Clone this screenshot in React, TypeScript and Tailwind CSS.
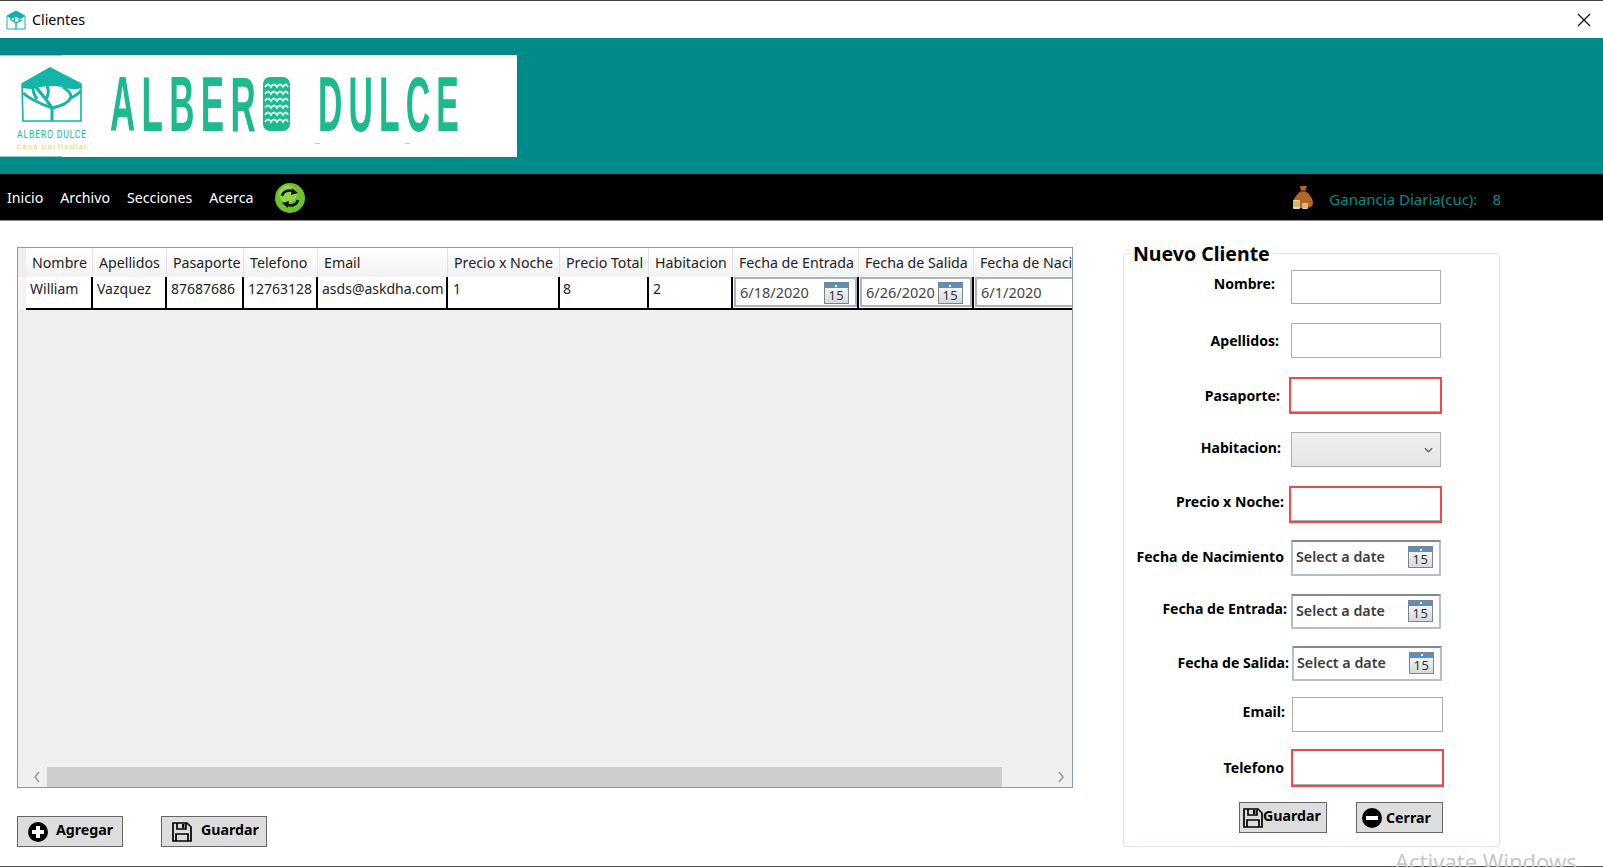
import type { ReactNode } from "react";

const uiFont = "font-['Noto_Sans','Open_Sans',sans-serif]";

function LogoArt() {
  return (
    <svg viewBox="0 0 517 102" className="block h-[102px] w-[517px] bg-white">
      <rect x="0" y="0" width="62" height="1" fill="#8fd0cc" />
      <rect x="0" y="101" width="62" height="1" fill="#8fd0cc" />
      {/* house with tree */}
      <path d="M22 29 L50 13 L81 29 L81 66 L23 66 Z" fill="none" stroke="#12b5a8" strokeWidth="1.6" />
      <path d="M22 29 L50 13 L81 29 L81 33 C74 36 68 33 62 32 C54 30 44 31 36 33 C30 35 26 33 22 33 Z" fill="#12b5a8" />
      <path
        d="M52 66 L52 53 M52 53 C48 46 42 40 36 32 M52 53 C44 50 32 46 23 38 M52 53 C60 51 68 49 71 42 C71 38 68 35 63 32 M46 44 C49 39 49 35 47 31 M71 43 C75 41 78 39 81 36 M37 44 C34 40 33 37 33 33"
        fill="none"
        stroke="#12b5a8"
        strokeWidth="3"
      />
      <text x="17" y="83" fontFamily="Roboto, sans-serif" fontSize="11" fill="#1cb894" textLength="70" lengthAdjust="spacingAndGlyphs" letterSpacing="1">
        ALBERO DULCE
      </text>
      <text x="17" y="94" fontFamily="Roboto, sans-serif" fontSize="8" fill="#f3cf5a" textLength="71" letterSpacing="1">
        casa particular
      </text>
      {/* big wordmark */}
      <text x="110" y="76" fontFamily="'Liberation Sans', sans-serif" fontWeight="700" fontSize="77" fill="#1fb98f" letterSpacing="14" textLength="152" lengthAdjust="spacingAndGlyphs">
        ALBER
      </text>
      <rect x="263" y="22" width="27" height="54" rx="7" fill="#1fb98f" />
      <path
        d="M265 32 q3 -5 6 0 q3 -5 6 0 q3 -5 6 0 q3 -5 5 0 M265 39 q3 -5 6 0 q3 -5 6 0 q3 -5 6 0 q3 -5 5 0 M265 46 q3 -5 6 0 q3 -5 6 0 q3 -5 6 0 q3 -5 5 0 M265 53 q3 -5 6 0 q3 -5 6 0 q3 -5 6 0 q3 -5 5 0 M265 60 q3 -5 6 0 q3 -5 6 0 q3 -5 6 0 q3 -5 5 0 M265 67 q3 -5 6 0 q3 -5 6 0 q3 -5 6 0 q3 -5 5 0"
        fill="none"
        stroke="#d6f3ea"
        strokeWidth="1.8"
      />
      <text x="318" y="76" fontFamily="'Liberation Sans', sans-serif" fontWeight="700" fontSize="77" fill="#1fb98f" letterSpacing="14" textLength="147" lengthAdjust="spacingAndGlyphs">
        DULCE
      </text>
      <rect x="315" y="88" width="5" height="1" fill="#f3cf5a" />
      <rect x="405" y="88" width="5" height="1" fill="#f3cf5a" />
    </svg>
  );
}

function TitleIcon() {
  return (
    <svg viewBox="0 0 20 20" className="h-5 w-5">
      <path d="M1 6 L10 1 L19 6 L19 19 L1 19 Z" fill="#fff" stroke="#15aeb0" strokeWidth="1" />
      <path d="M1 6 L10 1 L19 6 L15 9 L10 7 L5 9 Z" fill="#15aeb0" />
      <path d="M10 19 L10 13 M10 13 L4 9 M10 13 L16 10 M8 11 L9 8 M13 11 L13 8" stroke="#15aeb0" strokeWidth="1.3" fill="none" />
    </svg>
  );
}

function RefreshIcon() {
  return (
    <svg viewBox="0 0 30 30" className="h-[30px] w-[30px]">
      <circle cx="15" cy="15" r="15" fill="#6fc02c" />
      <circle cx="13" cy="11" r="9" fill="#8fd64a" />
      <path d="M7 13 C8 8 14 6 19 9" fill="none" stroke="#111" strokeWidth="2.6" />
      <path d="M17 5 L23 10 L16 12 Z" fill="#111" />
      <path d="M23 17 C22 22 16 24 11 21" fill="none" stroke="#111" strokeWidth="2.6" />
      <path d="M13 25 L7 20 L14 18 Z" fill="#111" />
    </svg>
  );
}

function MoneyBag() {
  return (
    <svg viewBox="0 0 22 24" className="h-6 w-[22px]">
      <path d="M8 1 L15 1 L13 6 C18 9 21 14 21 18 C21 22 18 23 11 23 C4 23 1 22 1 18 C1 14 5 9 9 6 Z" fill="#b5642a" />
      <rect x="9" y="5" width="5" height="2" fill="#6e3a14" />
      <rect x="1" y="15" width="7" height="9" rx="1" fill="#f0d79a" />
      <path d="M1 17 H8 M1 19 H8 M1 21 H8" stroke="#a9843f" strokeWidth="0.8" />
      <rect x="10" y="18" width="6" height="6" rx="1" fill="#f0d79a" />
      <path d="M10 20 H16 M10 22 H16" stroke="#a9843f" strokeWidth="0.8" />
    </svg>
  );
}

function CalendarIcon() {
  return (
    <div className="flex h-[22px] w-[25px] shrink-0 flex-col border border-[#7d848c] bg-gradient-to-b from-white to-[#d5d8dc]">
      <div className="flex h-[5px] items-center justify-center bg-[#5b8fc4]">
        <div className="h-[2px] w-[2px] bg-white" />
      </div>
      <div className={`${uiFont} flex flex-1 items-center justify-center text-[13px] leading-none tracking-[0.5px] text-[#333]`}>15</div>
    </div>
  );
}

function FloppyIcon({ className }: { className: string }) {
  return (
    <svg viewBox="0 0 20 20" className={className}>
      <path d="M1 1 H15 L19 5 V19 H1 Z" fill="none" stroke="#000" strokeWidth="1.7" />
      <path d="M5 1 V7 H14 V1" fill="none" stroke="#000" strokeWidth="1.7" />
      <rect x="10" y="2" width="2.4" height="4" fill="#000" />
      <path d="M4 19 V12 H16 V19" fill="none" stroke="#000" strokeWidth="1.7" />
    </svg>
  );
}

function CircleIcon({ plus }: { plus?: boolean }) {
  return (
    <svg viewBox="0 0 20 20" className="h-5 w-5">
      <circle cx="10" cy="10" r="10" fill="#000" />
      <rect x="4" y="8" width="12" height="4" fill="#fff" />
      {plus && <rect x="8" y="4" width="4" height="12" fill="#fff" />}
    </svg>
  );
}

const columns = [
  { title: "Nombre", value: "William", w: "w-[67px]", pad: "pl-[4px]" },
  { title: "Apellidos", value: "Vazquez", w: "w-[74px]", pad: "pl-[4px]" },
  { title: "Pasaporte", value: "87687686", w: "w-[77px]", pad: "pl-[4px]" },
  { title: "Telefono", value: "12763128", w: "w-[74px]", pad: "pl-[4px]" },
  { title: "Email", value: "asds@askdha.com", w: "w-[130px]", pad: "pl-[4px]" },
  { title: "Precio x Noche", value: "1", w: "w-[112px]", pad: "pl-[5px]" },
  { title: "Precio Total", value: "8", w: "w-[89px]", pad: "pl-[3px]" },
  { title: "Habitacion", value: "2", w: "w-[84px]", pad: "pl-[4px]" },
];

function DateCell({ w, value, gap, icon = true }: { w: string; value: string; gap: string; icon?: boolean }) {
  return (
    <div className={`${w} h-full shrink-0 border-r-2 border-black pl-[1px]`}>
      <div className="flex h-[30px] w-full items-center border-2 border-[#a9b4c2] bg-white pt-[2px] pl-[4px]">
        <span className="text-[14.5px] text-[#444]">{value}</span>
        {icon && <div className={gap}><CalendarIcon /></div>}
      </div>
    </div>
  );
}

function ClientsTable() {
  return (
    <div className="flex h-[541px] w-[1056px] flex-col overflow-hidden border border-[#7f9db9] bg-[#efefef]">
      <div className="flex flex-1 flex-col overflow-hidden">
        <div className="flex h-[29px] shrink-0 pl-[8px]">
          {columns.map((c) => (
            <div key={c.title} className={`${c.w} flex shrink-0 items-center border-r border-[#e3e3e3] bg-gradient-to-b from-white to-[#f2f2f2] pl-[6px] text-[14.2px] whitespace-nowrap text-[#222]`}>
              {c.title}
            </div>
          ))}
          <div className="flex w-[126px] shrink-0 items-center border-r border-[#e3e3e3] bg-gradient-to-b from-white to-[#f2f2f2] pl-[6px] text-[14.2px] whitespace-nowrap text-[#222]">Fecha de Entrada</div>
          <div className="flex w-[115px] shrink-0 items-center border-r border-[#e3e3e3] bg-gradient-to-b from-white to-[#f2f2f2] pl-[6px] text-[14.2px] whitespace-nowrap text-[#222]">Fecha de Salida</div>
          <div className="flex w-[120px] shrink-0 items-center bg-gradient-to-b from-white to-[#f2f2f2] pl-[6px] text-[14.2px] whitespace-nowrap text-[#222]">Fecha de Nacimiento</div>
        </div>
        <div className="flex h-[33px] shrink-0">
          <div className="w-[8px] shrink-0 bg-[#f4f4f4]" />
          <div className="flex h-full grow border-b-2 border-black bg-white">
            {columns.map((c) => (
              <div key={c.title} className={`${c.w} ${c.pad} h-full shrink-0 border-r-2 border-black text-[14px] leading-[24px] whitespace-nowrap text-[#222]`}>
                {c.value}
              </div>
            ))}
            <DateCell w="w-[126px]" value="6/18/2020" gap="ml-[15px]" />
            <DateCell w="w-[115px]" value="6/26/2020" gap="ml-[3px]" />
            <DateCell w="w-[120px]" value="6/1/2020" gap="" icon={false} />
          </div>
        </div>
      </div>
      <div className="flex h-5 shrink-0 items-center bg-[#f0f0f0]">
        <div className="flex w-[29px] justify-center pl-[8px] text-[#9a9a9a]">
          <svg viewBox="0 0 8 12" className="h-3 w-2"><path d="M6 1 L2 6 L6 11" fill="none" stroke="currentColor" strokeWidth="1.5" /></svg>
        </div>
        <div className="h-full w-[955px] bg-[#cdcdcd]" />
        <div className="flex flex-1 justify-end pr-[7px] text-[#9a9a9a]">
          <svg viewBox="0 0 8 12" className="h-3 w-2"><path d="M2 1 L6 6 L2 11" fill="none" stroke="currentColor" strokeWidth="1.5" /></svg>
        </div>
      </div>
    </div>
  );
}

function ToolButton({ icon, label, className, labelClass = "" }: { icon: ReactNode; label: string; className: string; labelClass?: string }) {
  return (
    <button type="button" className={`flex h-[31px] items-center border border-[#666] bg-[#dddddd] text-[14.2px] font-bold text-black ${className}`}>
      {icon}
      <span className={labelClass}>{label}</span>
    </button>
  );
}

function FormRow({ label, labelW, labelPad, fieldMl, rowMt, children }: { label: string; labelW: string; labelPad: string; fieldMl: string; rowMt: string; children: ReactNode }) {
  return (
    <div className={`flex ${rowMt}`}>
      <label className={`${labelW} ${labelPad} shrink-0 text-right text-[14.1px] leading-5 font-bold whitespace-nowrap text-black`}>{label}</label>
      <div className={fieldMl}>{children}</div>
    </div>
  );
}

function TextBox({ className }: { className: string }) {
  return <div className={`box-border border border-[#ababab] bg-white ${className}`} />;
}

function RedBox({ className }: { className: string }) {
  return (
    <div className={`box-border border-2 border-[#f0484e] bg-white shadow-[inset_0_-1px_0_#ababab] ${className}`} />
  );
}

function DatePick({ className = "w-[150px]", h }: { className?: string; h: string }) {
  return (
    <div className={`flex items-center justify-between border-2 border-t-[#7c8b9c] border-r-[#b5bfca] border-b-[#b5bfca] border-l-[#b5bfca] bg-white pr-[6px] pb-[2px] pl-[3px] ${className} ${h}`}>
      <span className="text-[14.3px] font-semibold text-[#3d3d3d]">Select a date</span>
      <CalendarIcon />
    </div>
  );
}

function NewClientForm() {
  return (
    <fieldset className="ml-[50px] box-border h-[606px] w-[377px] rounded-[3px] border border-[#dde3e8] pl-0">
      <legend className="ml-[7px] translate-y-px px-[2px] text-[19.5px] leading-[24px] font-bold text-black">Nuevo Cliente</legend>
      <FormRow label="Nombre:" labelW="w-[151px]" labelPad="pt-[4px]" fieldMl="ml-[16px]" rowMt="mt-[5px]">
        <TextBox className="h-[34px] w-[150px]" />
      </FormRow>
      <FormRow label="Apellidos:" labelW="w-[155px]" labelPad="pt-[8px]" fieldMl="ml-[12px]" rowMt="mt-[19px]">
        <TextBox className="h-[35px] w-[150px]" />
      </FormRow>
      <FormRow label="Pasaporte:" labelW="w-[156px]" labelPad="pt-[9px]" fieldMl="ml-[9px]" rowMt="mt-[19px]">
        <RedBox className="h-[37px] w-[153px]" />
      </FormRow>
      <FormRow label="Habitacion:" labelW="w-[157px]" labelPad="pt-[6px]" fieldMl="ml-[10px]" rowMt="mt-[18px]">
        <div className="flex h-[35px] w-[150px] items-center justify-end border border-[#ababab] bg-gradient-to-b from-[#f0f0f0] to-[#e5e5e5] pr-[7px]">
          <svg viewBox="0 0 10 6" className="h-[6px] w-[9px]"><path d="M1 1 L5 5 L9 1" fill="none" stroke="#606060" strokeWidth="1.4" /></svg>
        </div>
      </FormRow>
      <FormRow label="Precio x Noche:" labelW="w-[160px]" labelPad="pt-[6px]" fieldMl="ml-[5px]" rowMt="mt-[19px]">
        <RedBox className="h-[37px] w-[153px]" />
      </FormRow>
      <FormRow label="Fecha de Nacimiento" labelW="w-[160px]" labelPad="pt-[7px]" fieldMl="ml-[7px]" rowMt="mt-[17px]">
        <DatePick h="h-[36px]" />
      </FormRow>
      <FormRow label="Fecha de Entrada:" labelW="w-[163px]" labelPad="pt-[5px]" fieldMl="ml-[4px]" rowMt="mt-[18px]">
        <DatePick h="h-[35px]" />
      </FormRow>
      <FormRow label="Fecha de Salida:" labelW="w-[165px]" labelPad="pt-[7px]" fieldMl="ml-[3px]" rowMt="mt-[17px]">
        <DatePick h="h-[35px]" />
      </FormRow>
      <FormRow label="Email:" labelW="w-[161px]" labelPad="pt-[5px]" fieldMl="ml-[7px]" rowMt="mt-[16px]">
        <TextBox className="h-[35px] w-[151px]" />
      </FormRow>
      <FormRow label="Telefono" labelW="w-[160px]" labelPad="pt-[9px]" fieldMl="ml-[7px]" rowMt="mt-[17px]">
        <RedBox className="h-[38px] w-[153px]" />
      </FormRow>
      <div className="mt-[15px] ml-[115px] flex gap-[29px]">
        <ToolButton
          className="w-[88px] pl-[3px]"
          icon={<FloppyIcon className="h-5 w-5" />}
          label="Guardar"
          labelClass="pb-[3px]"
        />
        <ToolButton
          className="w-[87px] gap-[4px] pl-[5px]"
          icon={<CircleIcon />}
          label="Cerrar"
        />
      </div>
    </fieldset>
  );
}

export default function App() {
  return (
    <div className={`${uiFont} flex h-[867px] w-[1603px] flex-col overflow-hidden bg-white`}>
      {/* Title bar */}
      <header className="flex h-[38px] shrink-0 items-center border-t border-[#444] pr-[12px] pl-[6px]">
        <TitleIcon />
        <span className="ml-[6px] text-[14.2px] text-black">Clientes</span>
        <svg viewBox="0 0 14 14" className="ml-auto h-[14px] w-[14px]">
          <path d="M1 1 L13 13 M13 1 L1 13" stroke="#111" strokeWidth="1.3" />
        </svg>
      </header>

      {/* Logo band */}
      <div className="h-[136px] shrink-0 bg-[#008b8b] pt-[17px]">
        <LogoArt />
      </div>

      {/* Menu */}
      <nav className="flex h-[47px] shrink-0 items-center border-b border-[#888] bg-black pl-[7px] text-[14.2px] text-white">
        <span className="pt-[2px]">Inicio</span>
        <span className="ml-[17px] pt-[2px]">Archivo</span>
        <span className="ml-[17px] pt-[2px]">Secciones</span>
        <span className="ml-[17px] pt-[2px]">Acerca</span>
        <div className="ml-[22px] pt-[2px]"><RefreshIcon /></div>
        <div className="ml-auto flex items-center pr-[102px] text-[#008b8b]">
          <MoneyBag />
          <span className="ml-[15px] pt-[5px] text-[15px]">Ganancia Diaria(cuc):</span>
          <span className="ml-[15px] pt-[5px] text-[15px]">8</span>
        </div>
      </nav>

      <main className="flex min-h-0 flex-1 border-b border-[#555]">
        <section className="shrink-0 pt-[26px] pl-[17px]">
          <ClientsTable />
          <div className="mt-[28px] flex gap-[38px]">
            <ToolButton
              className="w-[106px] gap-[8px] pl-[10px]"
              icon={<CircleIcon plus />}
              label="Agregar"
              labelClass="pb-[3px]"
            />
            <ToolButton
              className="w-[106px] gap-[9px] pl-[10px]"
              icon={<FloppyIcon className="h-5 w-5" />}
              label="Guardar"
              labelClass="pb-[3px]"
            />
          </div>
        </section>
        <aside className="relative flex-1 pt-[20px]">
          <NewClientForm />
          <span className="absolute top-[629px] left-[322px] text-[22px] leading-none whitespace-nowrap text-[#c4c8cc]">Activate Windows</span>
        </aside>
      </main>
    </div>
  );
}
